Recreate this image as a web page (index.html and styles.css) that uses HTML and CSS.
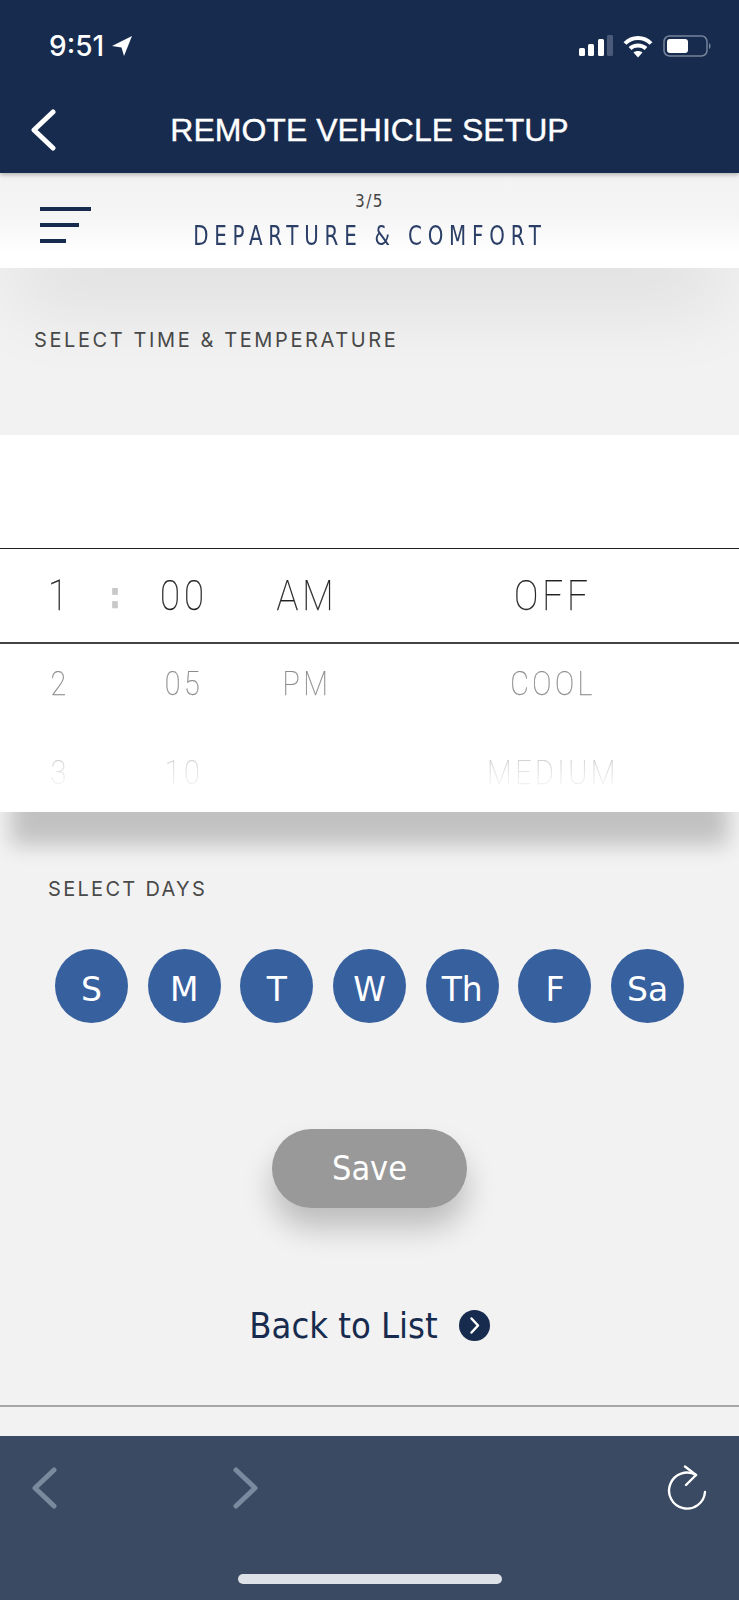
FILE: index.html
```html
<!DOCTYPE html>
<html lang="en">
<head>
    <meta charset="UTF-8">
    <meta name="viewport" content="width=device-width, initial-scale=1.0">
    <title>Remote Vehicle Setup</title>
    <link rel="stylesheet" href="styles.css">
</head>
<body>
    <header class="top-bar">
        <div class="status-bar">
            <div class="status-time">
                <span>9:51</span>
                <svg width="20" height="20" viewBox="0 0 20 20"><path d="M20 0 L0 10 L9.500 11.500 L12 20 Z" fill="#fff"/></svg>
            </div>
            <div class="status-icons">
                <svg width="34" height="22" viewBox="0 0 34 22">
                    <rect x="0" y="13" width="6" height="8" rx="1.500" fill="#fff"/>
                    <rect x="9" y="9" width="6" height="12" rx="1.500" fill="#fff"/>
                    <rect x="19" y="4" width="6" height="17" rx="1.500" fill="#fff"/>
                    <rect x="28" y="0" width="6" height="21" rx="1.500" fill="#4a5a78"/>
                </svg>
                <svg width="30" height="23" viewBox="0 0 30 23">
                    <path d="M2 8.500 C9 1 21 1 28 8.500 M7 13.500 C11.500 9.500 18.500 9.500 23 13.500" fill="none" stroke="#fff" stroke-width="4"/>
                    <path d="M10.500 17.500 C13 15.500 17 15.500 19.500 17.500 L15 22.500 Z" fill="#fff"/>
                </svg>
                <svg width="48" height="22" viewBox="0 0 48 22">
                    <rect x="1" y="1" width="43" height="20" rx="5.500" fill="none" stroke="#76849c" stroke-width="1.500"/>
                    <rect x="4" y="4" width="21" height="14" rx="3" fill="#fff"/>
                    <path d="M46 8 C48 9 48 13 46 14 Z" fill="#76849c"/>
                </svg>
            </div>
        </div>
        <div class="title-row">
            <svg class="title-back" width="26" height="42" viewBox="0 0 26 42"><path d="M23 3 L4 21 L23 39" fill="none" stroke="#fff" stroke-width="5" stroke-linecap="round" stroke-linejoin="round"/></svg>
            <h1>REMOTE VEHICLE SETUP</h1>
        </div>
    </header>

    <div class="step-bar">
        <div class="menu-icon">
            <span class="menu-long"></span>
            <span class="menu-mid"></span>
            <span class="menu-short"></span>
        </div>
        <div class="step-count">3/5</div>
        <div class="step-name">DEPARTURE &amp; COMFORT</div>
    </div>

    <main class="content">
        <div class="time-heading">
            <h2 class="section-label">SELECT TIME &amp; TEMPERATURE</h2>
        </div>

        <section class="picker">
            <div class="picker-row picker-selected">
                <span>1</span><span class="picker-colon">:</span><span>00</span><span>AM</span><span>OFF</span>
            </div>
            <div class="picker-row picker-next">
                <span>2</span><span></span><span>05</span><span>PM</span><span>COOL</span>
            </div>
            <div class="picker-row picker-last">
                <span>3</span><span></span><span>10</span><span></span><span>MEDIUM</span>
            </div>
        </section>

        <section class="days">
            <h2 class="section-label days-label">SELECT DAYS</h2>
            <div class="day-list">
                <div class="day">S</div>
                <div class="day">M</div>
                <div class="day">T</div>
                <div class="day">W</div>
                <div class="day">Th</div>
                <div class="day">F</div>
                <div class="day">Sa</div>
            </div>
        </section>

        <button class="save-button">Save</button>

        <a class="back-link">
            <span>Back to List</span>
            <svg width="31" height="31" viewBox="0 0 31 31">
                <circle cx="15.500" cy="15.500" r="15.500" fill="#172b4e"/>
                <path d="M12.500 8.500 L19 15.500 L12.500 22.500" fill="none" stroke="#fff" stroke-width="2.500" stroke-linecap="round" stroke-linejoin="round"/>
            </svg>
        </a>
    </main>

    <footer class="browser-bar">
        <div class="browser-buttons">
            <div class="browser-arrows">
                <svg width="26" height="42" viewBox="0 0 26 42"><path d="M23 3 L4 21 L23 39" fill="none" stroke="#7b899f" stroke-width="5" stroke-linecap="round" stroke-linejoin="round"/></svg>
                <svg width="26" height="42" viewBox="0 0 26 42"><path d="M3 3 L22 21 L3 39" fill="none" stroke="#7b899f" stroke-width="5" stroke-linecap="round" stroke-linejoin="round"/></svg>
            </div>
            <svg width="40" height="46" viewBox="0 0 40 46">
                <path d="M38 27 A18 18 0 1 1 29 10" fill="none" stroke="#fff" stroke-width="2.400" stroke-linecap="round"/>
                <path d="M18 1.500 L29 10 L19 20" fill="none" stroke="#fff" stroke-width="2.400" stroke-linecap="round" stroke-linejoin="round"/>
            </svg>
        </div>
        <div class="home-indicator"></div>
    </footer>
</body>
</html>
```

FILE: styles.css
```css
* {
    box-sizing: border-box;
}

body {
    font-family: 'DejaVu Sans', sans-serif;
    margin: 0;
    width: 739px;
    height: 1600px;
    overflow: hidden;
    background-color: #f2f2f2;
    display: flex;
    flex-direction: column;
}

.top-bar {
    background-color: #172b4e;
    height: 173px;
    color: #fff;
    flex-shrink: 0;
    position: relative;
    z-index: 2;
    box-shadow: 0 2px 4px rgba(0, 0, 0, 0.25);
}

.status-bar {
    display: flex;
    justify-content: space-between;
    align-items: center;
    padding: 29px 28px 0 49px;
    height: 63px;
}

.status-time {
    display: flex;
    align-items: center;
    gap: 8px;
    font-family: Inter, sans-serif;
    font-size: 28px;
    font-weight: 500;
}

.status-icons {
    display: flex;
    align-items: center;
    gap: 10px;
}

.title-row {
    display: flex;
    align-items: center;
    justify-content: center;
    position: relative;
    height: 72px;
    margin-top: 31px;
}

.title-back {
    position: absolute;
    left: 30px;
    top: 15px;
}

h1 {
    margin: 0;
    font-family: 'Liberation Sans', sans-serif;
    font-size: 32px;
    font-weight: 400;
    -webkit-text-stroke: 0.4px #fff;
}

.step-bar {
    height: 95px;
    flex-shrink: 0;
    background: linear-gradient(to bottom, #f2f2f2 0%, #f5f5f5 45%, #ffffff 85%);
    position: relative;
    z-index: 1;
    display: flex;
    flex-direction: column;
    align-items: center;
    padding-top: 18px;
    box-shadow: 0 50px 80px -14px rgba(0, 0, 0, 0.09);
}

.menu-icon {
    position: absolute;
    left: 40px;
    top: 34px;
    display: flex;
    flex-direction: column;
    gap: 12px;
}

.menu-icon span {
    display: block;
    height: 4px;
    background-color: #172b4e;
}

.menu-long {
    width: 51px;
}

.menu-mid {
    width: 39px;
}

.menu-short {
    width: 26px;
}

.step-count {
    font-size: 17px;
    font-stretch: condensed;
    letter-spacing: 1.500px;
    color: #444;
    line-height: 20px;
}

.step-name {
    font-stretch: condensed;
    font-size: 26px;
    letter-spacing: 6.800px;
    color: #2b3e66;
    margin-top: 10px;
    line-height: 30px;
    white-space: nowrap;
    transform: scaleX(0.85);
}

.content {
    flex: 1;
    display: flex;
    flex-direction: column;
    align-items: center;
}

.time-heading {
    height: 167px;
    width: 100%;
    padding: 60px 0 0 34px;
}

.section-label {
    margin: 0;
    font-family: Inter, sans-serif;
    font-size: 20px;
    font-weight: 400;
    color: #4a4a4a;
    letter-spacing: 2.600px;
    line-height: 24px;
}

.picker {
    width: 100%;
    height: 377px;
    background-color: #fff;
    padding-top: 113px;
    flex-shrink: 0;
    box-shadow: 0 44px 20px -11px rgba(0, 0, 0, 0.2);
    font-family: Roboto, sans-serif;
    font-weight: 100;
}

.picker-row {
    display: grid;
    grid-template-columns: 48px 66px 68px 178px 314px;
    padding-left: 36px;
    text-align: center;
    align-items: center;
}

.picker-row span {
    transform: scaleX(0.87);
    -webkit-text-stroke: 0.25px currentColor;
}

.picker-selected {
    height: 96px;
    border-top: 1.500px solid #222;
    border-bottom: 2px solid #444;
    font-size: 42px;
    letter-spacing: 4.500px;
    color: #222;
}

.picker-colon {
    font-family: 'DejaVu Sans', sans-serif;
    font-size: 36px;
    color: #c8c8c8;
    font-weight: 700;
}

.picker-next {
    height: 88px;
    padding-bottom: 10px;
    font-size: 33px;
    letter-spacing: 4px;
    color: #8c8c8c;
}

.picker-last {
    height: 80px;
    font-size: 33px;
    letter-spacing: 4px;
    color: #999;
    -webkit-mask-image: linear-gradient(to bottom, rgba(0, 0, 0, 0.6) 20%, rgba(0, 0, 0, 0.15) 62%);
    mask-image: linear-gradient(to bottom, rgba(0, 0, 0, 0.6) 20%, rgba(0, 0, 0, 0.15) 62%);
}

.days {
    width: 100%;
    padding: 66px 0 0 48px;
}

.days-label {
    letter-spacing: 2.300px;
    line-height: 22px;
}

.day-list {
    display: flex;
    gap: 19.700px;
    margin: 49px 0 0 7px;
}

.day {
    width: 73px;
    height: 74px;
    border-radius: 50%;
    background-color: #37609f;
    color: #fff;
    font-size: 33px;
    display: flex;
    align-items: center;
    justify-content: center;
    padding-top: 6px;
}

.save-button {
    width: 195px;
    height: 79px;
    margin-top: 106px;
    padding-bottom: 3px;
    border: none;
    border-radius: 40px;
    background-color: #999;
    color: #fff;
    font-family: 'DejaVu Sans', sans-serif;
    font-stretch: condensed;
    font-size: 34px;
    box-shadow: 0 20px 30px rgba(0, 0, 0, 0.22);
}

.back-link {
    display: flex;
    align-items: center;
    gap: 21px;
    margin-top: 97px;
    font-stretch: condensed;
    font-size: 36px;
    color: #172b4e;
}

.browser-bar {
    height: 164px;
    flex-shrink: 0;
    background-color: #3a4a63;
    position: relative;
    padding: 29px 32px 0 31px;
}

/* divider above the footer */
.browser-bar::before {
    content: "";
    position: absolute;
    left: 0;
    right: 0;
    top: -31px;
    height: 2px;
    background-color: #a6a6a6;
}

.browser-buttons {
    display: flex;
    justify-content: space-between;
    align-items: center;
}

.browser-arrows {
    display: flex;
    gap: 176px;
}

.home-indicator {
    position: absolute;
    left: 238px;
    top: 138px;
    width: 264px;
    height: 10px;
    border-radius: 5px;
    background-color: #dde1e8;
}
```
